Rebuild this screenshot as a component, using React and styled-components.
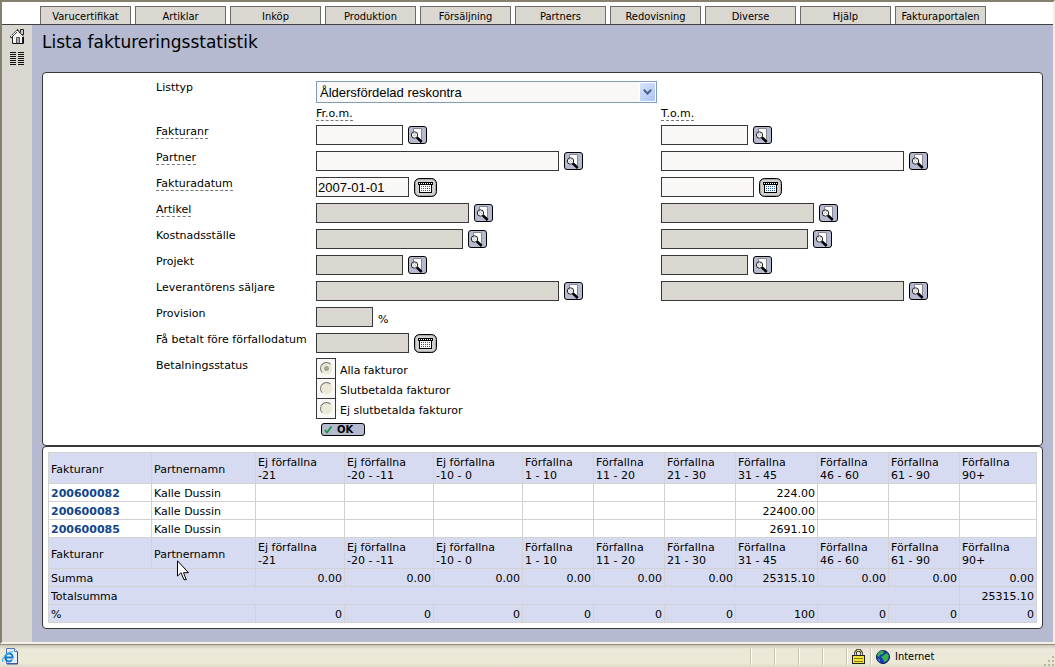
import React from 'react';
import styled, { createGlobalStyle, css } from 'styled-components';

const GlobalStyle = createGlobalStyle`
  * {
    box-sizing: border-box;
  }

  body {
    margin: 0;
    font-family: "DejaVu Sans", Verdana, sans-serif;
    font-size: 11px;
    line-height: 13px;
    color: #000;
  }
`;

const Window = styled.div`
  display: flex;
  flex-direction: column;
  min-height: 100vh;
  background: #ece9d8;
`;

const Viewport = styled.div`
  flex: 1;
  display: flex;
  flex-direction: column;
  border-style: solid;
  border-width: 2px;
  border-color: #84816f #f1efe2 #f4f2e8 #84816f;
`;

const TabBar = styled.nav`
  display: flex;
  align-items: flex-end;
  gap: 4px;
  height: 23px;
  padding-left: 38px;
  background: #fff;
  border-bottom: 1px solid #404040;
`;

const Tab = styled.a`
  width: 91px;
  height: 18px;
  padding-top: 3px;
  border: 1px solid #6b6b6b;
  border-bottom: 0;
  background: #dad7d0;
  color: #000;
  font-family: "DejaVu Sans Condensed", Tahoma, sans-serif;
  text-align: center;
  text-decoration: none;
  white-space: nowrap;
`;

const Body = styled.div`
  flex: 1;
  display: flex;
`;

const Sidebar = styled.aside`
  display: flex;
  flex-direction: column;
  align-items: center;
  gap: 8px;
  width: 30px;
  padding-top: 4px;
  background: #dad7d0;
`;

const IconButton = styled.button`
  display: block;
  flex: none;
  padding: 0;
  border: 0;
  background: none;

  svg {
    display: block;
  }
`;

const Main = styled.main`
  flex: 1;
  min-width: 0;
  padding: 6px 10px 12px;
  background: #b5bad1;
`;

const Title = styled.h1`
  height: 41px;
  margin: 0;
  font-size: 17px;
  font-weight: normal;
  line-height: 22px;
`;

const Panel = styled.div`
  border: 1px solid #383838;
  border-radius: 4px;
  background: #fff;
`;

const FormPanel = styled(Panel).attrs({ as: 'form' })`
  display: block;
  padding: 8px 8px 9px 113px;
`;

const TablePanel = styled(Panel)`
  padding: 5px;
`;

const Row = styled.div`
  display: grid;
  grid-template-columns: 160px 345px 1fr;
  height: ${({ $height }) => $height || 26}px;
`;

const Term = styled.span`
  ${({ $hint }) => $hint && css`
    border-bottom: 1px dashed #777;
  `}
`;

const Label = styled.label`
  white-space: nowrap;
`;

const Field = styled.div`
  display: flex;
  align-items: flex-start;
  gap: 5px;

  ${IconButton} {
    margin-top: 1px;
  }
`;

const Unit = styled.span`
  padding-top: 6px;
`;

const TextInput = styled.input`
  width: ${({ $width }) => $width}px;
  height: 20px;
  padding: 0 1px;
  border: 1px solid #383838;
  border-radius: 0;
  background: #f9f8f6;
  color: #000;
  font-family: "Liberation Sans", Arial, sans-serif;
  font-size: 13px;

  &:disabled {
    background: #dad7d0;
  }
`;

const SelectWrap = styled.div`
  position: relative;
  width: 341px;
  height: 22px;
`;

const Select = styled.select`
  appearance: none;
  width: 100%;
  height: 100%;
  padding: 0 20px 0 3px;
  border: 1px solid #7f9db9;
  border-radius: 0;
  background: #f9f8f6;
  color: #000;
  font-family: "Liberation Sans", Arial, sans-serif;
  font-size: 13px;
`;

const Arrow = styled.span`
  position: absolute;
  top: 1px;
  right: 1px;
  display: flex;
  align-items: center;
  justify-content: center;
  width: 17px;
  height: 20px;
  border: 1px solid #fff;
  border-radius: 2px;
  background: linear-gradient(135deg, #d6e2fd, #adc4f7);
  pointer-events: none;
`;

const RadioGroup = styled.div`
  display: flex;
  flex-direction: column;
  margin-top: -1px;
`;

const RadioLabel = styled.label`
  display: flex;
  gap: 4px;
  height: 20px;

  span {
    padding-top: 6px;
  }
`;

const Radio = styled.input`
  appearance: none;
  width: 20px;
  height: 21px;
  margin: 0;
  padding: 3px;
  border: 1px solid #383838;
  background: #f9f8f6;

  &::before {
    content: "";
    display: block;
    width: 11px;
    height: 11px;
    border: 1px solid;
    border-color: #77756a #f6f4ea #f6f4ea #77756a;
    border-radius: 50%;
    background: #ece9d8;
  }

  &:checked::before {
    background: radial-gradient(circle, #a7a596 2px, #ece9d8 3px);
  }
`;

const OkButton = styled.button`
  display: flex;
  align-items: center;
  gap: 4px;
  width: 44px;
  height: 13px;
  margin: 5px 0 0 5px;
  padding: 0 2px;
  border: 1px solid #000;
  border-radius: 3px;
  background: #b5bad1;
  color: #000;
  font-family: inherit;
  font-size: 10px;
  font-weight: bold;
  line-height: 11px;
`;

const Table = styled.table`
  width: 100%;
  table-layout: fixed;
  border-collapse: collapse;
`;

const cell = css`
  height: 18px;
  padding: 3px 2px 1px;
  border: 1px solid #d2d2d2;
  font-weight: normal;
  white-space: nowrap;
`;

const HeadCell = styled.th`
  ${cell}
  height: 31px;
  background: #d6dbf1;
  text-align: left;
`;

const Cell = styled.td`
  ${cell}
  background: ${({ $sum }) => ($sum ? '#d6dbf1' : '#fff')};
  text-align: ${({ $right }) => ($right ? 'right' : 'left')};
`;

const InvoiceLink = styled.a`
  color: #10458c;
  font-weight: bold;
  text-decoration: none;
`;

const PointerAnchor = styled.span`
  position: relative;

  svg {
    position: absolute;
    top: 12px;
    left: 23px;
  }
`;

const StatusBar = styled.footer`
  display: flex;
  align-items: stretch;
  height: 23px;
  border-top: 1px solid #8f8d80;
  background: linear-gradient(#c9c6b8, #ebe8d8 4px, #ece9d8 18px, #dedac6);
  font-family: "DejaVu Sans Condensed", Tahoma, sans-serif;
`;

const StatusMessage = styled.div`
  flex: 1;
  padding: 3px 2px;

  svg {
    display: block;
  }
`;

const StatusSlot = styled.div`
  display: flex;
  align-items: center;
  gap: 5px;
  width: ${({ $width }) => $width}px;
  margin: 3px 0 2px;
  padding: 0 5px;
  border-left: 1px solid #c8c5b3;
  box-shadow: inset 1px 0 #fff;
`;

const Grip = styled.svg`
  align-self: flex-end;
`;

const HomeIcon = () => (
  <svg width="15" height="15" viewBox="0 0 15 15">
    <path d="M2.5 7v7.5h10V7L7.500 2z" fill="#f4f4f4" stroke="#222" />
    <path d="M.5 8.500 7.500 1.500l6 6" fill="none" stroke="#222" strokeWidth="2" strokeDasharray="2 1" />
    <path d="M1 8 7 2l6 6" fill="none" stroke="#eee" />
    <path d="M10.500 3V.5h3V6" fill="#ccc" stroke="#222" />
    <path d="M6.500 14V8.500h3V14" fill="#aaa" stroke="#555" />
    <path d="M3 14.500h10.500V8" fill="none" stroke="#111" />
  </svg>
);

const ListIcon = () => (
  <svg width="14" height="13" viewBox="0 0 14 13" shapeRendering="crispEdges">
    <path d="M3 0v13M11 0v13" stroke="#111" strokeWidth="6" strokeDasharray="1 1" />
  </svg>
);

const SearchIcon = () => (
  <svg width="19" height="18" viewBox="0 0 19 18">
    <rect x=".5" y=".5" width="18" height="17" rx="2.500" fill="#b5bad1" stroke="#000" />
    <path d="M5.500 12V2.500h8v11h-3" fill="#fff" stroke="#85858f" />
    <path d="m8.500 11 5.200 5" stroke="#000" strokeWidth="2.500" />
    <circle cx="6.500" cy="9" r="3.200" fill="#f4f6f6" stroke="#222" />
    <path d="M5 7h1v1H5zM7 7h1v1H7zM6 8h1v1H6zM5 9h1v1H5zM7 9h1v1H7z" fill="#c4c4c4" />
  </svg>
);

const CalendarIcon = () => (
  <svg width="23" height="19" viewBox="0 0 23 19">
    <rect x=".5" y=".5" width="22" height="18" rx="5" fill="#aaa" stroke="#000" />
    <rect x="2" y="2" width="19" height="15" rx="3" fill="#d0d0ce" />
    <rect x="5.500" y="4.500" width="12" height="10" fill="#fff" stroke="#000" />
    <path d="M4 4h15v3H4z" />
    {[5, 7, 9, 11, 13, 15, 17].map((x) => (
      <rect key={x} x={x} y="5" width="1" height="1" fill="#fff" />
    ))}
    {[8, 10, 12].map((y) =>
      [7, 9, 11, 13, 15].map((x) => (
        <rect key={`${x}-${y}`} x={x} y={y} width="1" height="1" fill="#2758a8" />
      ))
    )}
  </svg>
);

const CheckIcon = () => (
  <svg width="9" height="9" viewBox="0 0 9 9">
    <path d="m1 5 2 2.500L7.500 1.500" fill="none" stroke="#239a3d" strokeWidth="2" />
  </svg>
);

const PointerIcon = () => (
  <svg width="13" height="21" viewBox="0 0 13 21">
    <path d="M.5.8v15.400l3.500-3.500 3 7h2.300l-2.800-7h5z" fill="#fff" stroke="#000" />
  </svg>
);

const PageIcon = () => (
  <svg width="17" height="17" viewBox="0 0 17 17">
    <path d="M4.500.5h8l3 3v12h-11z" fill="#e4eefc" stroke="#5872b4" />
    <path d="M12.500.5v3h3" fill="#fff" stroke="#5872b4" />
    <path d="M15.500 4v12H5" fill="none" stroke="#33488d" />
    <path
      d="M10 11.500c-.6 1.500-1.700 2-3 2-2.200 0-3.700-1.700-3.700-4s1.700-4 3.800-4c2.200 0 3.600 1.700 3.500 4H3.600"
      fill="none"
      stroke="#1680cf"
      strokeWidth="2"
    />
    <path d="M1 14C-1 11 5 4 11 3.500" fill="none" stroke="#45b4ed" strokeWidth="1.200" />
  </svg>
);

const LockIcon = () => (
  <svg width="13" height="15" viewBox="0 0 13 15">
    <path d="M3.500 7V3.500L5 1.500h3l1.500 2V7" fill="none" stroke="#222" strokeWidth="2.500" />
    <path d="M3.500 7V3.500L5 1.500h3l1.500 2V7" fill="none" stroke="#f4ed60" />
    <rect x=".5" y="6.500" width="12" height="8" fill="#f2e634" stroke="#222" />
    <path d="M2 9.500h9M2 12.500h9" stroke="#8c7d08" />
  </svg>
);

const GlobeIcon = () => (
  <svg width="14" height="14" viewBox="0 0 14 14">
    <circle cx="7" cy="7" r="6.500" fill="#1639b4" stroke="#101a50" />
    <path d="M2 3c2-2.500 5-2.500 6-2L7 4 4 5 3 7 1 6zM8 5l3-2 2 3-2 5-3 1-1-3-2-2z" fill="#35b548" />
    <path d="m2 8 2 2-1 2z" fill="#5ca4f0" />
  </svg>
);

const menu = [
  'Varucertifikat',
  'Artiklar',
  'Inköp',
  'Produktion',
  'Försäljning',
  'Partners',
  'Redovisning',
  'Diverse',
  'Hjälp',
  'Fakturaportalen',
];

const fields = [
  { id: 'fakturanr', label: 'Fakturanr', width: 87, hint: true, range: true },
  { id: 'partner', label: 'Partner', width: 243, hint: true, range: true },
  { id: 'fakturadatum', label: 'Fakturadatum', width: 93, hint: true, range: true, date: true, value: '2007-01-01' },
  { id: 'artikel', label: 'Artikel', width: 153, hint: true, range: true, disabled: true },
  { id: 'kostnadsstalle', label: 'Kostnadsställe', width: 147, range: true, disabled: true },
  { id: 'projekt', label: 'Projekt', width: 87, range: true, disabled: true },
  { id: 'saljare', label: 'Leverantörens säljare', width: 243, range: true, disabled: true },
  { id: 'provision', label: 'Provision', width: 57, disabled: true, unit: '%' },
  { id: 'forfallodatum', label: 'Få betalt före förfallodatum', width: 93, disabled: true, date: true },
];

const statuses = ['Alla fakturor', 'Slutbetalda fakturor', 'Ej slutbetalda fakturor'];

const columnWidths = [103, 104, 89, 89, 89, 71, 71, 71, 82, 71, 71, 77];

const periods = [
  ['Ej förfallna', '-21'],
  ['Ej förfallna', '-20 - -11'],
  ['Ej förfallna', '-10 - 0'],
  ['Förfallna', '1 - 10'],
  ['Förfallna', '11 - 20'],
  ['Förfallna', '21 - 30'],
  ['Förfallna', '31 - 45'],
  ['Förfallna', '46 - 60'],
  ['Förfallna', '61 - 90'],
  ['Förfallna', '90+'],
];

const invoices = [
  { nr: '200600082', partner: 'Kalle Dussin', amount: '224.00' },
  { nr: '200600083', partner: 'Kalle Dussin', amount: '22400.00' },
  { nr: '200600085', partner: 'Kalle Dussin', amount: '2691.10' },
];

const sums = ['0.00', '0.00', '0.00', '0.00', '0.00', '0.00', '25315.10', '0.00', '0.00', '0.00'];
const percents = ['0', '0', '0', '0', '0', '0', '100', '0', '0', '0'];

const FieldInput = ({ field, id, value }) => (
  <Field>
    <TextInput id={id} aria-label={field.label} $width={field.width} disabled={field.disabled} defaultValue={value} />
    {field.unit ? (
      <Unit>{field.unit}</Unit>
    ) : (
      <IconButton type="button" aria-label={field.date ? 'Kalender' : 'Sök'}>
        {field.date ? <CalendarIcon /> : <SearchIcon />}
      </IconButton>
    )}
  </Field>
);

const HeadRow = ({ pointer }) => (
  <tr>
    <HeadCell>Fakturanr</HeadCell>
    <HeadCell>
      {pointer && <PointerAnchor><PointerIcon /></PointerAnchor>}
      Partnernamn
    </HeadCell>
    {periods.map(([title, days]) => (
      <HeadCell key={days}>
        {title}
        <br />
        {days}
      </HeadCell>
    ))}
  </tr>
);

const App = () => {
  return (
    <Window>
      <GlobalStyle />
      <Viewport>
        <TabBar>
          {menu.map((item) => (
            <Tab key={item} href="#">{item}</Tab>
          ))}
        </TabBar>
        <Body>
          <Sidebar>
            <IconButton type="button" aria-label="Hem"><HomeIcon /></IconButton>
            <IconButton type="button" aria-label="Lista"><ListIcon /></IconButton>
          </Sidebar>
          <Main>
            <Title>Lista faktureringsstatistik</Title>

            <FormPanel>
              <Row>
                <Label htmlFor="listtyp">Listtyp</Label>
                <SelectWrap>
                  <Select id="listtyp">
                    <option>Åldersfördelad reskontra</option>
                  </Select>
                  <Arrow>
                    <svg width="9" height="6" viewBox="0 0 9 6">
                      <path d="m.8.8 3.700 3.700L8.200.8" fill="none" stroke="#4d6185" strokeWidth="2" />
                    </svg>
                  </Arrow>
                </SelectWrap>
              </Row>
              <Row $height={18}>
                <span />
                <span><Term $hint>Fr.o.m.</Term></span>
                <span><Term $hint>T.o.m.</Term></span>
              </Row>
              {fields.map((field) => (
                <Row key={field.id}>
                  <Label htmlFor={field.id}>
                    <Term $hint={field.hint}>{field.label}</Term>
                  </Label>
                  <FieldInput field={field} id={field.id} value={field.value} />
                  {field.range && <FieldInput field={field} id={`${field.id}-tom`} />}
                </Row>
              ))}
              <Row $height={77}>
                <span>Betalningsstatus</span>
                <RadioGroup role="radiogroup" aria-label="Betalningsstatus">
                  {statuses.map((status, i) => (
                    <RadioLabel key={status}>
                      <Radio type="radio" name="status" defaultChecked={i === 0} />
                      <span>{status}</span>
                    </RadioLabel>
                  ))}
                  <OkButton type="button"><CheckIcon />OK</OkButton>
                </RadioGroup>
              </Row>
            </FormPanel>

            <TablePanel>
              <Table>
                <colgroup>
                  {columnWidths.map((width, i) => (
                    <col key={i} width={width} />
                  ))}
                </colgroup>
                <thead>
                  <HeadRow />
                </thead>
                <tbody>
                  {invoices.map(({ nr, partner, amount }) => (
                    <tr key={nr}>
                      <Cell><InvoiceLink href="#">{nr}</InvoiceLink></Cell>
                      <Cell>{partner}</Cell>
                      {periods.map(([, days]) => (
                        <Cell key={days} $right>{days === '31 - 45' ? amount : ''}</Cell>
                      ))}
                    </tr>
                  ))}
                </tbody>
                <tfoot>
                  <HeadRow pointer />
                  <tr>
                    <Cell $sum colSpan={2}>Summa</Cell>
                    {sums.map((sum, i) => <Cell key={i} $sum $right>{sum}</Cell>)}
                  </tr>
                  <tr>
                    <Cell $sum colSpan={11}>Totalsumma</Cell>
                    <Cell $sum $right>25315.10</Cell>
                  </tr>
                  <tr>
                    <Cell $sum colSpan={2}>%</Cell>
                    {percents.map((percent, i) => <Cell key={i} $sum $right>{percent}</Cell>)}
                  </tr>
                </tfoot>
              </Table>
            </TablePanel>
          </Main>
        </Body>
      </Viewport>

      <StatusBar>
        <StatusMessage><PageIcon /></StatusMessage>
        <StatusSlot $width={24} />
        <StatusSlot $width={24} />
        <StatusSlot $width={24} />
        <StatusSlot $width={24} />
        <StatusSlot $width={24}><LockIcon /></StatusSlot>
        <StatusSlot $width={173}>
          <GlobeIcon />
          Internet
        </StatusSlot>
        <Grip width="12" height="12" viewBox="0 0 12 12" shapeRendering="crispEdges">
          <path d="M9 2h2M5 6h2M9 6h2M1 10h2M5 10h2M9 10h2" stroke="#b8b4a2" strokeWidth="2" />
        </Grip>
      </StatusBar>
    </Window>
  );
};

export default App;
